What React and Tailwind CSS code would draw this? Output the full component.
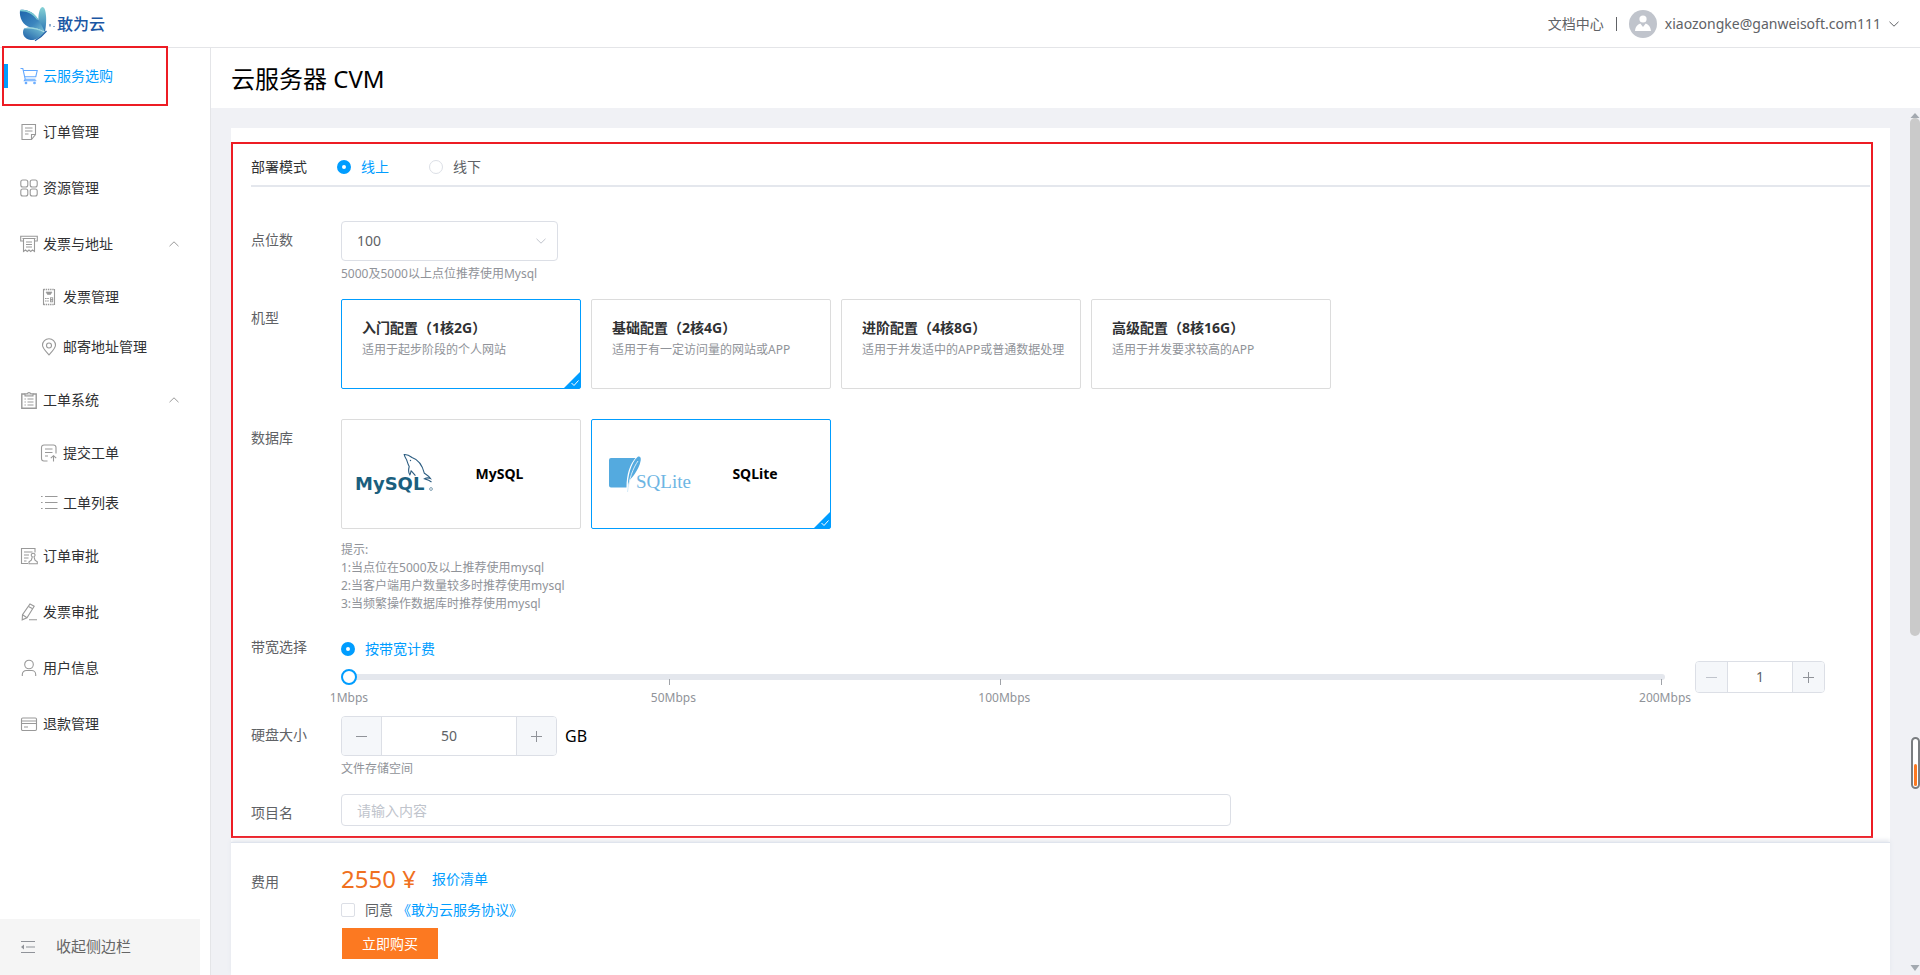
import { useState } from 'react'
import clsx from 'clsx'

// ─── Icons ────────────────────────────────────────────────────────────────────

const ICONS = {
  cart: (
    <>
      <path d="M0.5 1.5h2.3l2.4 10.7h10.3" />
      <path d="M3.3 3.5h13.9l-1.4 6.2H4.8" />
      <path d="M5.2 12.2l-.9 1.6h12" />
      <circle cx="6" cy="16" r="0.8" />
      <circle cx="14.5" cy="16" r="0.8" />
    </>
  ),
  note: (
    <>
      <path d="M2 1.5h13.5v10l-4 5H2z" />
      <path d="M15.5 11.5h-4v5M5 5h7.5M5 8h7.5M5 11h3.5" />
    </>
  ),
  grid: (
    <>
      <rect x="0.8" y="1" width="7" height="7" rx="2" />
      <rect x="10.2" y="1" width="7" height="7" rx="2" />
      <rect x="0.8" y="10" width="7" height="7" rx="2" />
      <rect x="10.2" y="10" width="7" height="7" rx="2" />
    </>
  ),
  receipt: (
    <>
      <path d="M3.5 6H0.7V1.2h16.600V6h-2.800" />
      <path d="M3.500 3.500v13l2-1.500 1.800 1.500L9 15l1.700 1.500 1.800-1.500 2 1.500v-13M2.500 3.500h13" />
      <path d="M6 7h6M6 9.500h6M6 12h6" />
    </>
  ),
  invoice: (
    <>
      <path d="M3.5 1v16M14.5 1v16" />
      <path d="M3.5 1.5h11M3.5 16.5h11" strokeDasharray="1.4 0.8" strokeWidth="1.6" />
      <path d="M6 4h6l-1.5 2.5h-3z" fill="currentColor" strokeWidth="0.6" />
      <path d="M5 10.5h4M5 13h4" strokeDasharray="1.6 0.6" />
      <rect x="10.5" y="9.8" width="2.2" height="1.8" strokeWidth="0.9" />
      <rect x="10.5" y="12" width="2.2" height="1.8" strokeWidth="0.9" />
    </>
  ),
  pin: (
    <>
      <path d="M9 17C5 12.500 2.500 10 2.500 7.300a6.500 6.500 0 0 1 13 0C15.500 10 13 12.500 9 17z" />
      <circle cx="9" cy="7.500" r="2.500" />
    </>
  ),
  clipboard: (
    <>
      <path d="M5 3H1.800v14.200h14.400V3H13" strokeWidth="1.400" />
      <path d="M5 5V2.800h2.200a1.900 1.900 0 0 1 3.600 0H13V5z" fill="currentColor" fillOpacity="0.35" />
      <path d="M7.500 8h6M7.500 11h6M7.500 14h6M4.500 8h1.300M4.500 11h1.300M4.500 14h1.300" />
    </>
  ),
  submit: (
    <>
      <path d="M7.500 17H4a2.500 2.500 0 0 1-2.500-2.500V3.500A2.500 2.500 0 0 1 4 1h9.500A2.500 2.500 0 0 1 16 3.500V9.500" />
      <path d="M5 5h7.500M5 8.500h7.500M5 12h3M13.500 17.500v-5.500M10.800 14.200l2.700-2.500 2.700 2.500" />
    </>
  ),
  list: (
    <path d="M5 2.500h12.500M5 8.500h12.500M5 14.500h12.500M1 2.500h1.600M1 8.500h1.600M1 14.500h1.600" />
  ),
  stamp: (
    <>
      <path d="M15 5.500v-4H1.500v15H8" />
      <path d="M4 5h8.500M4 8h5M4 11h4.500M4 14h2.500" />
      <path d="M9 16.700h8.300v-1.900l-2.300-1.600-1-3.400a1.900 1.900 0 1 0-1.700 0l-1 3.400L9 14.800z" />
    </>
  ),
  pen: (
    <>
      <path d="M10 1l4.200 2.200L7 14.800l-4.800 2 .3-5z" />
      <path d="M8.500 3.500l4.200 2.300M2.500 11.800L7 14.800M9 16.700h8" />
    </>
  ),
  user: (
    <>
      <circle cx="9" cy="5.500" r="4.300" />
      <path d="M2.300 17v-1.500a4 4 0 0 1 4-4h5.400a4 4 0 0 1 4 4V17" />
    </>
  ),
  card: (
    <>
      <rect x="1.500" y="3" width="15" height="12.500" rx="1.200" />
      <path d="M1.500 6h15M1.500 8.500h15M4 12h4" />
    </>
  ),
}

function Icon({ name, className }) {
  return (
    <svg
      viewBox="0 0 18 18"
      fill="none"
      stroke="currentColor"
      strokeWidth="1.1"
      className={clsx('h-[18px] w-[18px] shrink-0', className)}
      aria-hidden="true"
    >
      {ICONS[name]}
    </svg>
  )
}

function Chevron({ up, className }) {
  return (
    <svg viewBox="0 0 10 6" fill="none" stroke="currentColor" className={clsx('h-[6px] w-[10px]', className)} aria-hidden="true">
      <path d={up ? 'M0.5 5.2L5 0.8l4.500 4.400' : 'M0.5 0.8L5 5.200l4.500-4.400'} />
    </svg>
  )
}

function ButterflyLogo() {
  return (
    <svg viewBox="0 0 38 36" className="h-9 w-[38px]" aria-hidden="true">
      <defs>
        <linearGradient id="wingA" x1="0" y1="0" x2="1" y2="1">
          <stop offset="0" stopColor="#1c63ab" />
          <stop offset="0.6" stopColor="#3c86be" />
          <stop offset="1" stopColor="#7cc4d4" />
        </linearGradient>
        <linearGradient id="wingB" x1="0" y1="0" x2="0" y2="1">
          <stop offset="0" stopColor="#86d3d6" />
          <stop offset="1" stopColor="#2b74b4" />
        </linearGradient>
        <linearGradient id="wingC" x1="1" y1="0" x2="0" y2="1">
          <stop offset="0" stopColor="#7cc9d8" />
          <stop offset="1" stopColor="#1a5ba6" />
        </linearGradient>
      </defs>
      <path d="M20.500 15.500C20 9 21.500 1.500 24.500 1c3.200 0 4 9.500 3.600 15.500-.2 4-.6 7-1.200 9.500C24.500 23.500 22 19.500 20.500 15.500z" fill="url(#wingB)" />
      <path d="M2 4c6-1.500 14 2 18 9 3 5 5.500 9 6.500 13-5-3-9-4-14-4.500C5 19.500 1 12 2 4z" fill="url(#wingA)" />
      <path d="M2 4c6-1.500 14 2 18 9l-.8 1C15 8 9 5 2 5.300z" fill="#7ccbd2" />
      <path d="M6 22.500c7-2.500 14.500-.5 20.500 4C22 31 18 34.500 12.500 34 7 33.500 3 28 6 22.500z" fill="url(#wingC)" />
      <path d="M6 22.500c7-2.500 14.500-.5 20.500 4-6-3-13-4.500-20.500-4z" fill="#9fdadf" />
      <path d="M17 34.800c4-2.200 8-5.600 11.500-9.800" stroke="#1f5fa6" strokeWidth="1.2" fill="none" />
      <path d="M32 18v2.500M36 20v1" stroke="#1f5fa6" strokeWidth="1" />
    </svg>
  )
}

function MysqlLogo() {
  return (
    <svg viewBox="0 0 80 44" className="h-11 w-20 shrink-0" role="img" aria-label="MySQL logo">
      <text x="0" y="38" fontFamily="DejaVu Sans, sans-serif" fontWeight="bold" fontSize="18" fill="#1b5f7e">
        MySQL
      </text>
      <circle cx="76" cy="37" r="1.400" fill="none" stroke="#7f9fb2" />
      <path
        d="M76.500 30c-2.500-2-4.500-2.500-7-3.200 1.800-1 4.500-1 6-.3-1.500-2.500-4-3.800-6.200-5.300C67.500 14 63 7.500 57 5.500c-2.500-2-5.500-3.200-7.800-3 .3 2.500 1.800 3.800 2.600 5.800.8 2.400 1.200 4 2.400 6.200-.8 3-1 6 .6 8.300.8-1 .8-2.500 1.400-4 1.400 1.200 2.500 3 4.200 4.800"
        fill="none"
        stroke="#2b5c80"
        strokeWidth="1.100"
      />
      <circle cx="55.500" cy="8.500" r="0.700" fill="#2b5c80" />
    </svg>
  )
}

function SqliteLogo() {
  return (
    <svg viewBox="0 0 88 40" className="h-10 w-[88px] shrink-0" role="img" aria-label="SQLite logo">
      <path d="M3 4h24.500C22 10 18.500 20 18.500 33.500H3a2 2 0 0 1-2-2V6a2 2 0 0 1 2-2z" fill="#54aadf" />
      <path d="M20 33c-.6-10 3-24 9.500-30 2-1.300 3.800.3 3.200 3.500-.8 5-3.500 9.500-6 13.500-2.200 3.500-4.500 5-5.200 6.500z" fill="#54aadf" />
      <path d="M30 7c-5 7-9 18-10.500 31" fill="none" stroke="#d6ecf9" strokeWidth="1" />
      <text x="28" y="34" fontFamily="Liberation Serif, serif" fontSize="19" fill="#6db5e3">
        SQLite
      </text>
    </svg>
  )
}

// ─── Sidebar ──────────────────────────────────────────────────────────────────

const MENU = [
  { icon: 'cart', label: '云服务选购', active: true },
  { icon: 'note', label: '订单管理' },
  { icon: 'grid', label: '资源管理' },
  {
    icon: 'receipt',
    label: '发票与地址',
    children: [
      { icon: 'invoice', label: '发票管理' },
      { icon: 'pin', label: '邮寄地址管理' },
    ],
  },
  {
    icon: 'clipboard',
    label: '工单系统',
    children: [
      { icon: 'submit', label: '提交工单' },
      { icon: 'list', label: '工单列表' },
    ],
  },
  { icon: 'stamp', label: '订单审批' },
  { icon: 'pen', label: '发票审批' },
  { icon: 'user', label: '用户信息' },
  { icon: 'card', label: '退款管理' },
]

function MenuItem({ item }) {
  return (
    <li>
      <a
        href="#"
        className={clsx(
          'relative flex h-14 items-center gap-[5px] pr-[31px] pl-5',
          item.active ? 'text-[#009dff]' : 'text-[#303133]'
        )}
      >
        {item.active && <span className="absolute left-1 h-6 w-1 bg-[#009dff]" />}
        <Icon name={item.icon} className={item.active ? 'text-[#62a8ff]' : 'text-[#999]'} />
        {item.label}
        {item.children && <Chevron up className="ml-auto text-[#999]" />}
      </a>
      {item.children && (
        <ul>
          {item.children.map(sub => (
            <li key={sub.label}>
              <a href="#" className="flex h-[50px] items-center gap-[5px] pl-10 text-[#303133]">
                <Icon name={sub.icon} className="text-[#999]" />
                {sub.label}
              </a>
            </li>
          ))}
        </ul>
      )}
    </li>
  )
}

function Sidebar() {
  return (
    <aside className="relative flex w-[211px] shrink-0 flex-col border-r border-[#e4e5e8] bg-white">
      <nav>
        <ul>
          {MENU.map(item => <MenuItem key={item.label} item={item} />)}
        </ul>
      </nav>
      <button className="mt-auto mr-[10px] flex h-14 items-center gap-5 bg-[#f5f5f5] pl-5 text-[15px] text-[#666]">
        <svg viewBox="0 0 16 14" className="h-[14px] w-4 text-[#909399]" fill="none" stroke="currentColor" aria-hidden="true">
          <path d="M1 1.500h14M6 7h9M1 12.500h14" strokeWidth="1.200" />
          <path d="M4 4.500v5L1 7z" fill="currentColor" stroke="none" />
        </svg>
        收起侧边栏
      </button>
      {/* highlight around the first entry */}
      <div className="pointer-events-none absolute -top-[2px] left-[2px] h-[60px] w-[166px] border-2 border-[#ed1c24]" />
    </aside>
  )
}

// ─── Form pieces ──────────────────────────────────────────────────────────────

function Row({ label, htmlFor, className, children }) {
  const Tag = htmlFor ? 'label' : 'span'
  return (
    <div className={clsx('flex', className)}>
      <Tag htmlFor={htmlFor} className="w-[90px] shrink-0 leading-[38px]">{label}</Tag>
      <div className="min-w-0 flex-1">{children}</div>
    </div>
  )
}

function Radio({ name, label, checked, onChange }) {
  return (
    <label className={clsx('flex items-center gap-[10px]', checked ? 'text-[#009dff]' : 'text-[#606266]')}>
      <input
        type="radio"
        name={name}
        checked={checked}
        onChange={onChange}
        className="h-[14px] w-[14px] appearance-none rounded-full border border-[#dcdfe6] bg-white checked:border-5 checked:border-[#009dff]"
      />
      {label}
    </label>
  )
}

function OptionCard({ active, onClick, className, children }) {
  return (
    <button
      aria-pressed={active}
      onClick={onClick}
      className={clsx(
        'relative w-60 rounded-xs border bg-white text-left',
        active ? 'border-[#009dff]' : 'border-[#dcdcdc]',
        className
      )}
    >
      {children}
      {active && (
        <svg viewBox="0 0 16 16" className="absolute right-0 bottom-0 h-4 w-4" aria-hidden="true">
          <path d="M16 0v16H0z" fill="#009dff" />
          <path d="M7.500 11l2.500 2.500 4.500-5" fill="none" stroke="#fff" />
        </svg>
      )}
    </button>
  )
}

function Stepper({ id, label, value, onChange, min, small }) {
  const btn = clsx(
    'flex shrink-0 items-center justify-center bg-[#f5f7fa] text-[#909399] disabled:text-[#c0c4cc]',
    small ? 'w-[31px]' : 'w-[39px]'
  )
  return (
    <div className={clsx('flex shrink-0 overflow-hidden rounded-sm border border-[#dcdfe6]', small ? 'h-8 w-[130px]' : 'h-10 w-[216px]')}>
      <button className={btn} aria-label="减少" disabled={value <= min} onClick={() => onChange(value - 1)}>
        <svg viewBox="0 0 11 11" className="h-[11px] w-[11px]" stroke="currentColor" aria-hidden="true">
          <path d="M0 5.500h11" />
        </svg>
      </button>
      <input
        id={id}
        aria-label={label}
        value={value}
        onChange={e => onChange(Number(e.target.value) || min)}
        className="w-0 flex-1 border-x border-[#dcdfe6] text-center text-[#606266] outline-none"
      />
      <button className={btn} aria-label="增加" onClick={() => onChange(value + 1)}>
        <svg viewBox="0 0 11 11" className="h-[11px] w-[11px]" stroke="currentColor" aria-hidden="true">
          <path d="M0 5.500h11M5.500 0v11" />
        </svg>
      </button>
    </div>
  )
}

const MODELS = [
  { title: '入门配置（1核2G）', desc: '适用于起步阶段的个人网站' },
  { title: '基础配置（2核4G）', desc: '适用于有一定访问量的网站或APP' },
  { title: '进阶配置（4核8G）', desc: '适用于并发适中的APP或普通数据处理' },
  { title: '高级配置（8核16G）', desc: '适用于并发要求较高的APP' },
]

// position of each mark along the track, in percent
const MARKS = [
  { at: 0.3, label: '1Mbps' },
  { at: 24.8, label: '50Mbps' },
  { at: 49.8, label: '100Mbps' },
  { at: 99.7, label: '200Mbps' },
]

function BandwidthSlider({ value, onChange }) {
  return (
    <div className="relative flex h-8 flex-1 items-center">
      <input
        type="range"
        min="1"
        max="200"
        value={value}
        aria-label="带宽"
        onChange={e => onChange(Number(e.target.value))}
        className="h-[6px] w-full appearance-none rounded-full bg-[#e4e7ed] [&::-webkit-slider-thumb]:relative [&::-webkit-slider-thumb]:z-10 [&::-webkit-slider-thumb]:h-4 [&::-webkit-slider-thumb]:w-4 [&::-webkit-slider-thumb]:appearance-none [&::-webkit-slider-thumb]:rounded-full [&::-webkit-slider-thumb]:border-2 [&::-webkit-slider-thumb]:border-[#009dff] [&::-webkit-slider-thumb]:bg-white"
      />
      {MARKS.slice(1).map(m => (
        <span key={m.label} className="absolute top-[18px] h-[6px] w-px bg-[#a0a3a8]" style={{ left: `${m.at}%` }} />
      ))}
      {MARKS.map(m => (
        <span
          key={m.label}
          className="absolute top-7 -translate-x-1/2 text-xs leading-[18px] text-[#909399]"
          style={{ left: `calc(${m.at}% + 4px)` }}
        >
          {m.label}
        </span>
      ))}
    </div>
  )
}

// ─── Page ─────────────────────────────────────────────────────────────────────

export default function App() {
  const [mode, setMode] = useState('online')
  const [points, setPoints] = useState('100')
  const [model, setModel] = useState(0)
  const [db, setDb] = useState('SQLite')
  const [bandwidth, setBandwidth] = useState(1)
  const [disk, setDisk] = useState(50)
  const [agree, setAgree] = useState(false)

  return (
    <div className="flex h-screen flex-col bg-white font-['Noto_Sans','Noto_Sans_CJK_SC',sans-serif] text-sm text-[#606266]">
      <header className="flex h-12 shrink-0 items-center border-b border-[#e4e5e8] pr-[21px] pl-[18px]">
        <ButterflyLogo />
        <span className="pt-px pl-px text-base font-medium text-[#1a56a3]">敢为云</span>
        <a href="#" className="ml-auto">文档中心</a>
        <span className="mx-3 h-[14px] w-px bg-[#606266]" />
        <svg viewBox="0 0 28 28" className="mr-2 h-7 w-7" aria-hidden="true">
          <circle cx="14" cy="14" r="14" fill="#c0c4cc" />
          <circle cx="14" cy="9" r="3.600" fill="#fff" />
          <path d="M6 21c.5-4.500 2.500-6.500 5.300-7.500L14 17l2.700-3.500c2.800 1 4.800 3 5.300 7.500z" fill="#fff" />
        </svg>
        <button className="flex items-center gap-2">
          xiaozongke@ganweisoft.com111
          <Chevron />
        </button>
      </header>

      <div className="flex min-h-0 flex-1">
        <Sidebar />

        <main className="flex min-w-0 flex-1 flex-col">
          <h1 className="flex h-[60px] shrink-0 items-center pt-px pl-5 text-2xl text-black">云服务器 CVM</h1>

          <div className="relative flex min-h-0 flex-1 flex-col bg-[#f0f1f5] pt-5 pr-[30px] pl-5">
            {/* Order form */}
            <section className="relative min-h-0 flex-1 bg-white px-5 pt-5">
              <div className="flex h-[39px] items-center border-b-2 border-[#e4e7ed]">
                <span className="w-[86px] text-[#303133]">部署模式</span>
                <div className="flex gap-10">
                  <Radio name="mode" label="线上" checked={mode === 'online'} onChange={() => setMode('online')} />
                  <Radio name="mode" label="线下" checked={mode === 'offline'} onChange={() => setMode('offline')} />
                </div>
              </div>

              <Row label="点位数" htmlFor="points" className="mt-[34px]">
                <div className="relative w-[217px]">
                  <select
                    id="points"
                    value={points}
                    onChange={e => setPoints(e.target.value)}
                    className="h-10 w-full appearance-none rounded-sm border border-[#dcdfe6] bg-white px-[15px] text-[#606266] outline-none"
                  >
                    <option>100</option>
                    <option>500</option>
                    <option>1000</option>
                    <option>5000</option>
                  </select>
                  <Chevron className="pointer-events-none absolute top-[17px] right-3 text-[#c0c4cc]" />
                </div>
                <p className="mt-1 text-xs leading-[18px] text-[#909399]">5000及5000以上点位推荐使用Mysql</p>
              </Row>

              <Row label="机型" className="mt-4">
                <div className="flex gap-[10px]">
                  {MODELS.map((m, i) => (
                    <OptionCard key={m.title} active={model === i} onClick={() => setModel(i)} className="h-[90px] px-5 pb-3">
                      <span className="block leading-6 font-bold text-[#303133]">{m.title}</span>
                      <span className="block text-xs leading-5 whitespace-nowrap text-[#909399]">{m.desc}</span>
                    </OptionCard>
                  ))}
                </div>
              </Row>

              <Row label="数据库" className="mt-[30px]">
                <div className="flex gap-[10px]">
                  <OptionCard active={db === 'MySQL'} onClick={() => setDb('MySQL')} className="flex h-[110px] items-center pl-[13px]">
                    <MysqlLogo />
                    <span className="flex-1 pr-4 text-center font-bold text-black">MySQL</span>
                  </OptionCard>
                  <OptionCard active={db === 'SQLite'} onClick={() => setDb('SQLite')} className="flex h-[110px] items-center pl-4">
                    <SqliteLogo />
                    <span className="flex-1 pr-4 text-center font-bold text-black">SQLite</span>
                  </OptionCard>
                </div>
                <div className="mt-3 text-xs leading-[18px] text-[#909399]">
                  <p>提示:</p>
                  <p>1:当点位在5000及以上推荐使用mysql</p>
                  <p>2:当客户端用户数量较多时推荐使用mysql</p>
                  <p>3:当频繁操作数据库时推荐使用mysql</p>
                </div>
              </Row>

              <Row label="带宽选择" className="mt-[15px]">
                <div className="flex h-[33px] items-center pt-2">
                  <Radio name="billing" label="按带宽计费" checked onChange={() => {}} />
                </div>
                <div className="flex gap-[30px] pr-[45px]">
                  <BandwidthSlider value={bandwidth} onChange={setBandwidth} />
                  <Stepper small label="带宽" value={bandwidth} onChange={setBandwidth} min={1} />
                </div>
              </Row>

              <Row label="硬盘大小" htmlFor="disk" className="mt-[23px]">
                <div className="flex items-center gap-2">
                  <Stepper id="disk" value={disk} onChange={setDisk} min={10} />
                  <span className="text-base text-black">GB</span>
                </div>
                <p className="mt-1 text-xs leading-[18px] text-[#909399]">文件存储空间</p>
              </Row>

              <Row label="项目名" htmlFor="project" className="mt-4">
                <input
                  id="project"
                  placeholder="请输入内容"
                  className="block h-8 w-full max-w-[890px] rounded-sm border border-[#dcdfe6] px-[15px] outline-none placeholder:text-[#c0c4cc]"
                />
              </Row>

              {/* highlight around the form */}
              <div className="pointer-events-none absolute top-[14px] right-[17px] bottom-1 left-0 border-2 border-[#ed1c24]" />
            </section>

            {/* Price and purchase */}
            <section className="relative shrink-0 border-t border-[#dfe4ed] bg-white px-5 pt-5 pb-4 shadow-[0_-2px_4px_#e4e7ed]">
              <Row label="费用">
                <div className="flex h-8 items-center gap-4">
                  <span className="text-2xl text-[#f07020]">2550 ¥</span>
                  <a href="#" className="text-[#009dff]">报价清单</a>
                </div>
                <div className="mt-1 flex h-[22px] items-center">
                  <label className="flex items-center gap-[10px]">
                    <input
                      type="checkbox"
                      checked={agree}
                      onChange={e => setAgree(e.target.checked)}
                      className="h-[14px] w-[14px] appearance-none rounded-xs border border-[#dcdfe6] bg-white checked:bg-[#009dff]"
                    />
                    同意
                  </label>
                  <a href="#" className="ml-1 text-[#009dff]">《敢为云服务协议》</a>
                </div>
                <button className="mt-[7px] ml-px h-[31px] w-24 bg-[#fc7921] text-white">立即购买</button>
              </Row>
            </section>

            {/* Scroll rail */}
            <div className="absolute top-1 right-0 bottom-1 flex w-[10px] flex-col items-center justify-between" aria-hidden="true">
              <div className="flex w-full flex-col items-center">
                <svg viewBox="0 0 10 6" className="h-[6px] w-[10px]"><path d="M5 1l4.500 5h-9z" fill="#a3a9b0" /></svg>
                <div className="h-[518px] w-full rounded-full bg-[#cacaca]" />
              </div>
              <svg viewBox="0 0 10 6" className="h-[6px] w-[10px]"><path d="M5 6L.5 0h9z" fill="#a3a9b0" /></svg>
            </div>
            <div className="absolute right-0 bottom-[186px] flex h-[52px] w-[9px] items-end justify-center rounded-full border-2 border-[#7a7d80] bg-white pb-px" aria-hidden="true">
              <div className="h-[22px] w-[3px] rounded-full bg-[#fc7921]" />
            </div>
          </div>
        </main>
      </div>
    </div>
  )
}
